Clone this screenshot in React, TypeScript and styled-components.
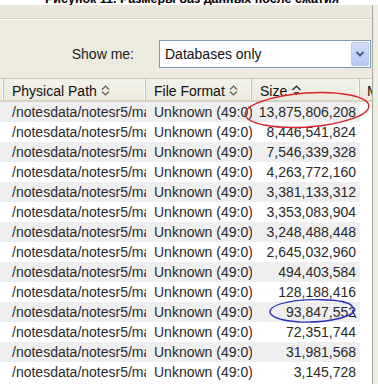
import React from "react";
import styled, { createGlobalStyle } from "styled-components";

const GlobalStyle = createGlobalStyle`
  html, body { margin: 0; padding: 0; background: #ffffff; }
  body { font-family: "Liberation Sans", Arial, sans-serif; }
`;

const Screen = styled.div`
  position: relative;
  width: 378px;
  height: 384px;
  overflow: hidden;
  display: flex;
  flex-direction: column;
  background: #ffffff;
`;

const Caption = styled.div`
  height: 5px;
  flex-shrink: 0;
  overflow: hidden;
  display: flex;
  align-items: flex-end;
  padding-left: 45px;
  background: #ffffff;
`;

const CaptionText = styled.div`
  flex-shrink: 0;
  font: bold 12.5px/11px "Liberation Sans", Arial, sans-serif;
  color: #000;
  white-space: nowrap;
`;

const Frame = styled.div`
  flex: 1;
  display: flex;
  min-height: 0;
`;

const Main = styled.div`
  width: 372px;
  display: flex;
  flex-direction: column;
  border-right: 1px solid #a9a797;
  background: #ffffff;
`;

const Edge = styled.div`
  flex: 1;
  background: #eeede4;
`;

const TopBand = styled.div`
  height: 13px;
  background: #e9e8da;
  border-bottom: 1px solid #d5d2c1;
`;

const Panel = styled.div`
  border-top: 1px solid #fbfbf6;
  background: #ecebdd;
  padding: 20px 1px 10px 0;
  display: flex;
  justify-content: flex-end;
  align-items: center;
  gap: 25px;
`;

const Label = styled.span`
  font-size: 14px;
  color: #222;
`;

const SelectBox = styled.div`
  box-sizing: border-box;
  width: 212px;
  height: 28px;
  border: 1px solid #7f9db9;
  background: #ffffff;
  display: flex;
  align-items: center;
  padding: 0 1px 0 5px;
  font-size: 14px;
  color: #111;
`;

const SelectValue = styled.span`
  flex: 1;
`;

const DropButton = styled.div`
  box-sizing: border-box;
  width: 18px;
  height: 24px;
  border: 1px solid #bccbef;
  border-radius: 2px;
  background: linear-gradient(#d3ddfb, #b7c8f5);
  display: flex;
  align-items: center;
  justify-content: center;
`;

const cols = "4px 142px 106px 108px 1fr";

const Header = styled.div`
  box-sizing: border-box;
  height: 24px;
  display: grid;
  grid-template-columns: ${cols};
  border-top: 1px solid #c9c7b6;
  border-bottom: 2px solid #d6d2c2;
  background: linear-gradient(#f4f3ea, #ebeadb);
`;

const HeaderCell = styled.div<{ $pad?: number }>`
  box-sizing: border-box;
  display: flex;
  align-items: center;
  gap: 4px;
  padding: 2px 0 0 ${(p) => p.$pad ?? 8}px;
  font-size: 14px;
  color: #111;
  white-space: nowrap;
  overflow: hidden;
  border-right: 1px solid #c5c3b0;
  box-shadow: inset -1px 0 0 #fbfbf7;
  &:last-child { border-right: none; box-shadow: none; }
`;

const Body = styled.div`
  flex: 1;
  background: #ffffff;
`;

const Row = styled.div<{ $alt: boolean }>`
  height: 20px;
  display: grid;
  grid-template-columns: ${cols};
  background: ${(p) => (p.$alt ? "#efefef" : "#ffffff")};
  font-size: 14px;
  line-height: 20px;
  color: #2a2a2a;
`;

const Cell = styled.div<{ $right?: boolean }>`
  overflow: hidden;
  white-space: nowrap;
  padding: ${(p) => (p.$right ? "0 4px 0 0" : "0 0 0 8px")};
  text-align: ${(p) => (p.$right ? "right" : "left")};
`;

const Filler = styled.div`
  background: #ffffff;
`;

const Overlay = styled.svg`
  position: absolute;
  left: 0;
  top: 0;
  pointer-events: none;
`;

const SortBoth = () => (
  <svg width="9" height="11" viewBox="0 0 9 11">
    <path d="M1 4.5 L4.5 1 L8 4.5 M1 6.5 L4.5 10 L8 6.5" fill="none" stroke="#5a5a5a" strokeWidth="1.1" />
  </svg>
);

const SortUp = () => (
  <svg width="11" height="11" viewBox="0 0 11 11">
    <path d="M1.5 5 L5.5 1.2 L9.5 5" fill="none" stroke="#333" strokeWidth="1.4" />
    <path d="M2.5 7 L8.5 7 L5.5 10 Z" fill="#444" />
  </svg>
);

const Chevron = () => (
  <svg width="10" height="8" viewBox="0 0 10 8">
    <path d="M1.5 2 L5 5.5 L8.5 2" fill="none" stroke="#4a5f8c" strokeWidth="2" />
  </svg>
);

const sizes = [
  "13,875,806,208",
  "8,446,541,824",
  "7,546,339,328",
  "4,263,772,160",
  "3,381,133,312",
  "3,353,083,904",
  "3,248,488,448",
  "2,645,032,960",
  "494,403,584",
  "128,188,416",
  "93,847,552",
  "72,351,744",
  "31,981,568",
  "3,145,728",
];

export default function App() {
  return (
    <>
      <GlobalStyle />
      <Screen>
        <Caption>
          <CaptionText>Рисунок 11. Размеры баз данных после сжатия</CaptionText>
        </Caption>
        <Frame>
          <Main>
            <TopBand />
            <Panel>
              <Label>Show me:</Label>
              <SelectBox>
                <SelectValue>Databases only</SelectValue>
                <DropButton>
                  <Chevron />
                </DropButton>
              </SelectBox>
            </Panel>
            <Header>
              <HeaderCell $pad={0} />
              <HeaderCell>
                Physical Path <SortBoth />
              </HeaderCell>
              <HeaderCell>
                File Format <SortBoth />
              </HeaderCell>
              <HeaderCell>
                Size <SortUp />
              </HeaderCell>
              <HeaderCell $pad={7}>M</HeaderCell>
            </Header>
            <Body>
              {sizes.map((s, i) => (
                <Row key={i} $alt={i % 2 === 0}>
                  <div />
                  <Cell>/notesdata/notesr5/mail</Cell>
                  <Cell>Unknown (49:0)</Cell>
                  <Cell $right>{s}</Cell>
                  <Filler />
                </Row>
              ))}
            </Body>
          </Main>
          <Edge />
        </Frame>
        <Overlay width="378" height="384" viewBox="0 0 378 384">
          <ellipse
            cx="307"
            cy="110"
            rx="62"
            ry="17"
            transform="rotate(-4 307 110)"
            fill="none"
            stroke="#d8232a"
            strokeWidth="1.4"
          />
          <path
            d="M352 306 C 346 298, 300 298, 280 304 C 262 310, 268 320, 300 322 C 330 323, 356 316, 354 309 C 352 304, 346 302, 342 302 M352 310 L356 318"
            fill="none"
            stroke="#2a2fb0"
            strokeWidth="1.3"
          />
        </Overlay>
      </Screen>
    </>
  );
}
